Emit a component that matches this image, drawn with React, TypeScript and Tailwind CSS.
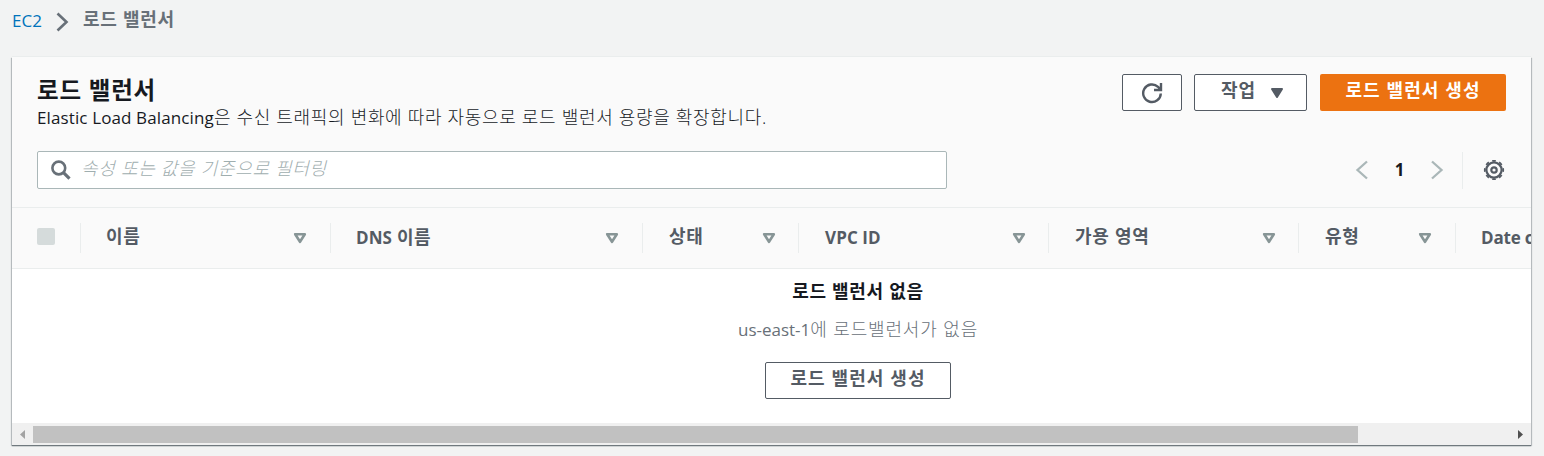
import React from "react";

const SortIcon = () => (
  <svg width="14" height="12" viewBox="0 0 14 12" className="shrink-0">
    <path d="M2.2 2.2h9.6L7 9.8z" fill="none" stroke="#879596" strokeWidth="2.6" strokeLinejoin="round" />
  </svg>
);

const Chevron = ({ flip = false }: { flip?: boolean }) => (
  <svg width="14" height="20" viewBox="0 0 14 20" fill="none" stroke="#aab7b8" strokeWidth="2.3">
    <path d={flip ? "M2 1.5l9.500 8.500L2 18.500" : "M12 1.500L2.500 10l9.500 8.500"} />
  </svg>
);

const columns = [
  { label: "이름", cell: "w-[250px] pl-[25px] pr-[23px]", text: "text-[18px] tracking-[0.7px] -top-[1.5px]" },
  { latin: "DNS", label: " 이름", cell: "w-[312px] pl-[25px] pr-[23px]", text: "text-[18px] tracking-[0.3px] -top-px" },
  { label: "상태", cell: "w-[156px] pl-[26px] pr-[22px]", text: "text-[18px] tracking-[0.7px] -top-[1.5px]" },
  { latin: "VPC ID", label: "", cell: "w-[250px] pl-[26px] pr-[22px]", text: "text-[17px]" },
  { label: "가용 영역", cell: "w-[250px] pl-[26px] pr-[22px]", text: "text-[18px] tracking-[0.7px] -top-[1.5px]" },
  { label: "유형", cell: "w-[157px] pl-[26px] pr-[23px]", text: "text-[18px] tracking-[0.7px] -top-[1.5px]" },
];

export default function App() {
  return (
    <div className="flex h-[456px] w-[1544px] flex-col overflow-hidden bg-[#f2f3f3] font-['Open_Sans','Noto_Sans_CJK_KR',sans-serif] text-[17px] text-[#16191f]">
      <nav className="flex h-[57px] shrink-0 items-start pl-3">
        <a className="w-[44px] pt-[9px] leading-6 text-[#0073bb]">EC2</a>
        <svg width="14" height="20" viewBox="0 0 14 20" className="mt-3" fill="none" stroke="#687078" strokeWidth="2.6">
          <path d="M1.500 1.500l9 8.500-9 8.500" />
        </svg>
        <span className="ml-[13px] pt-[7px] text-[18px] font-bold leading-6 tracking-[0.7px] text-[#687078]">로드 밸런서</span>
      </nav>

      <main className="ml-3 flex h-[388px] w-[1519px] shrink-0 flex-col overflow-hidden bg-white shadow-[0_1px_1px_0_#70797e,1px_1px_1px_0_#c3c8ca,-1px_1px_1px_0_#c3c8ca,0_-1px_0_0_#eaeded]">
        <header className="h-[151px] shrink-0 border-b border-[#eaeded] bg-[#fafafa] px-[25px]">
          <div className="flex h-[94px] justify-between">
            <div className="pt-[18px]">
              <h1 className="text-[23.5px] font-bold leading-[31px] tracking-[0.8px]">로드 밸런서</h1>
              <p className="-mt-px text-[18px] font-light leading-6 tracking-[0.68px]">
                <span className="text-[17px] font-normal tracking-[0.12px]">Elastic Load Balancing</span>은 수신 트래픽의 변화에 따라 자동으로 로드 밸런서 용량을 확장합니다.
              </p>
            </div>
            <div className="flex pt-[17px] text-[18px] font-bold text-[#545b64]">
              <button className="flex h-[37px] w-[60px] items-center justify-center rounded-xs border border-[#545b64] bg-white">
                <svg width="22" height="22" viewBox="0 0 22 22" fill="none" stroke="#545b64" strokeWidth="2.400">
                  <path d="M19.800 11.500A8.800 8.800 0 1 1 17 4.800l2 2.200M20 1v7h-7" />
                </svg>
              </button>
              <button className="ml-3 flex h-[37px] w-[113px] items-start rounded-xs border border-[#545b64] bg-white pl-[26px] pt-[3px] leading-6 tracking-[1px]">
                작업
                <svg width="14" height="12" viewBox="0 0 14 12" className="ml-[14px] mt-[9px] shrink-0">
                  <path d="M2 2h10l-5 8z" fill="#545b64" stroke="#545b64" strokeWidth="2" strokeLinejoin="round" />
                </svg>
              </button>
              <button className="ml-[13px] h-[37px] w-[186px] rounded-xs bg-[#ec7211] pb-[4px] tracking-[1.100px] text-white">로드 밸런서 생성</button>
            </div>
          </div>
          <div className="flex h-[38px] items-center justify-between">
            <label className="flex h-[38px] w-[910px] items-center rounded-xs border border-[#aab7b8] bg-white pl-[13px]">
              <svg width="20" height="20" viewBox="0 0 20 20" fill="none" stroke="#687078">
                <circle cx="7.800" cy="8" r="6.400" strokeWidth="2.600" />
                <path d="M12.500 12.700l6 6" strokeWidth="3.200" />
              </svg>
              <span className="ml-[10px] pb-[3px] text-[18px] font-light italic tracking-[0.7px] text-[#9faeaf]">속성 또는 값을 기준으로 필터링</span>
            </label>
            <div className="mr-px flex h-[38px] items-center">
              <Chevron />
              <b className="mb-[1px] w-[61px] text-center text-[17px]">1</b>
              <Chevron flip />
              <span className="ml-[18px] h-[37px] w-px bg-[#eaeded]" />
              <svg width="22" height="22" viewBox="0 0 22 22" className="ml-5" fill="none" stroke="#545b64">
                <circle cx="11" cy="11" r="7.600" strokeWidth="2.200" />
                <circle cx="11" cy="11" r="9.200" strokeWidth="1.800" pathLength="80" strokeDasharray="5 5" strokeDashoffset="2.500" />
                <circle cx="11" cy="11" r="2.700" strokeWidth="2.200" />
              </svg>
            </div>
          </div>
        </header>

        <div className="flex h-[61px] shrink-0 items-center border-b border-[#eaeded] bg-[#fafafa] font-bold text-[#545b64]">
          <div className="w-[68px] shrink-0 pl-[25px]">
            <div className="mb-[3px] h-[17px] w-[18px] rounded-xs bg-[#d5dbdb]" />
          </div>
          {columns.map((column, index) => (
            <div key={index} className={`flex h-[30px] shrink-0 items-center justify-between border-l border-[#eaeded] ${column.cell}`}>
              <span className={`relative whitespace-pre ${column.text}`}>
                {column.latin && <span className="text-[17px] tracking-[0.1px]">{column.latin}</span>}
                {column.label}
              </span>
              <SortIcon />
            </div>
          ))}
          <div className="flex h-[30px] shrink-0 items-center border-l border-[#eaeded] pl-[25px] tracking-[-0.2px]">Date created</div>
        </div>

        <section className="flex h-[154px] w-[1692px] shrink-0 flex-col items-center pt-[10px] text-[18px]">
          <b className="leading-6 tracking-[0.7px]">로드 밸런서 없음</b>
          <p className="mt-[14px] font-light leading-6 tracking-[0.850px] text-[#687078]">
            <span className="text-[17px] font-normal tracking-normal">us-east-1</span>에 로드밸런서가 없음
          </p>
          <button className="mt-[20px] h-[37px] w-[186px] shrink-0 rounded-xs border border-[#545b64] pb-[4px] font-bold tracking-[1.100px] text-[#545b64]">로드 밸런서 생성</button>
        </section>

        <div className="flex h-[22px] shrink-0 items-center bg-[#f0f0f0]">
          <svg width="21" height="17" viewBox="0 0 21 17"><path d="M13 4v9L8 8.500z" fill="#a3a3a3" /></svg>
          <div className="h-[17px] w-[1325px] bg-[#c1c1c1]" />
          <svg width="21" height="17" viewBox="0 0 21 17" className="ml-[152px]"><path d="M8 4v9l5-4.500z" fill="#505050" /></svg>
        </div>
      </main>
    </div>
  );
}
